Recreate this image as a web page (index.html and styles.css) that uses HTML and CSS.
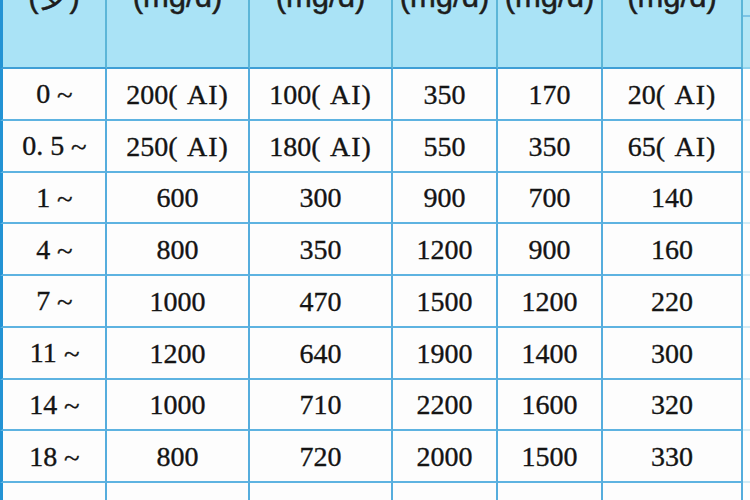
FILE: index.html
```html
<!DOCTYPE html>
<html lang="zh-CN">
<head>
<meta charset="utf-8">
<title>膳食矿物质参考摄入量</title>
<link rel="stylesheet" href="styles.css">
</head>
<body>
<div class="page">
  <table class="dri">
    <colgroup>
      <col class="c-age">
      <col class="c-wide">
      <col class="c-wide">
      <col class="c-narrow">
      <col class="c-narrow">
      <col class="c-mg">
      <col class="c-edge">
    </colgroup>
    <thead>
      <tr>
        <th><div class="head">年龄<br>(岁)</div></th>
        <th><div class="head">钙 Ca<br>(mg/d)</div></th>
        <th><div class="head">磷 P<br>(mg/d)</div></th>
        <th><div class="head">钾 K<br>(mg/d)</div></th>
        <th><div class="head">钠 Na<br>(mg/d)</div></th>
        <th><div class="head">镁 Mg<br>(mg/d)</div></th>
        <th class="edge"></th>
      </tr>
    </thead>
    <tbody>
      <tr><td>0 <span class="tl">~</span></td><td>200<span class="ai">( AI)</span></td><td>100<span class="ai">( AI)</span></td><td>350</td><td>170</td><td>20<span class="ai">( AI)</span></td><td class="edge"></td></tr>
      <tr><td>0. 5 <span class="tl">~</span></td><td>250<span class="ai">( AI)</span></td><td>180<span class="ai">( AI)</span></td><td>550</td><td>350</td><td>65<span class="ai">( AI)</span></td><td class="edge"></td></tr>
      <tr><td>1 <span class="tl">~</span></td><td>600</td><td>300</td><td>900</td><td>700</td><td>140</td><td class="edge"></td></tr>
      <tr><td>4 <span class="tl">~</span></td><td>800</td><td>350</td><td>1200</td><td>900</td><td>160</td><td class="edge"></td></tr>
      <tr><td>7 <span class="tl">~</span></td><td>1000</td><td>470</td><td>1500</td><td>1200</td><td>220</td><td class="edge"></td></tr>
      <tr><td>11 <span class="tl">~</span></td><td>1200</td><td>640</td><td>1900</td><td>1400</td><td>300</td><td class="edge"></td></tr>
      <tr><td>14 <span class="tl">~</span></td><td>1000</td><td>710</td><td>2200</td><td>1600</td><td>320</td><td class="edge"></td></tr>
      <tr><td>18 <span class="tl">~</span></td><td>800</td><td>720</td><td>2000</td><td>1500</td><td>330</td><td class="edge"></td></tr>
      <tr class="last"><td>50 <span class="tl">~</span></td><td>1000</td><td>720</td><td>2000</td><td>1400</td><td>330</td><td class="edge"></td></tr>
    </tbody>
  </table>
</div>
</body>
</html>
```

FILE: styles.css
```css
html, body {
  margin: 0;
  padding: 0;
  background: #fcfdfd;
}

.page {
  width: 750px;
  height: 500px;
  overflow: hidden;
}

.dri {
  width: 750px;
  table-layout: fixed;
  border-collapse: separate;
  border-spacing: 0;
  font-family: "Liberation Serif", "Noto Sans CJK SC", serif;
  color: #141414;
}

.c-age { width: 107px; }
.c-wide { width: 143px; }
.c-narrow { width: 105px; }
.c-mg { width: 140px; }
.c-edge { width: 7px; }

.dri th,
.dri td {
  box-sizing: border-box;
  padding: 0;
  text-align: center;
  border-right: 2px solid #55addd;
  border-bottom: 2px solid #5eb3e1;
}

.dri th:first-child,
.dri td:first-child {
  border-left: 3px solid #2393d4;
}

.dri th {
  height: 69px;
  vertical-align: top;
  background: #aae3f6;
  border-right-color: #5cb6d8;
  border-bottom-color: #3f9fd6;
  font-weight: normal;
  overflow: visible;
}

.head {
  margin-top: -54px;
  font-family: "Liberation Sans", "Noto Sans CJK SC", sans-serif;
  font-size: 31px;
  line-height: 34px;
  color: #1d1d1d;
  white-space: nowrap;
  -webkit-text-stroke: 0.5px #1d1d1d;
}

.dri td {
  height: 51.75px;
  font-size: 28px;
  line-height: 30px;
  vertical-align: middle;
  padding-top: 2px;
  background: #fdfdfd;
  -webkit-text-stroke: 0.35px #141414;
}

.dri tr.last td {
  height: 64px;
}

.ai {
  letter-spacing: 1px;
  word-spacing: 2px;
}

.tl {
  display: inline-block;
  font-size: 25px;
  transform: scaleX(1.15);
  margin-left: 1px;
}

.dri th.edge {
  border-right: none;
  border-bottom-color: #8fd3ee;
  background: linear-gradient(to bottom, #b3e7f6 0, #b3e7f6 15px, #7cc4e6 15px, #7cc4e6 17px, #b3e7f6 17px);
}

.dri td.edge {
  border-right: none;
  border-bottom-color: #d5ecf6;
  background: #fefefe;
}
```
